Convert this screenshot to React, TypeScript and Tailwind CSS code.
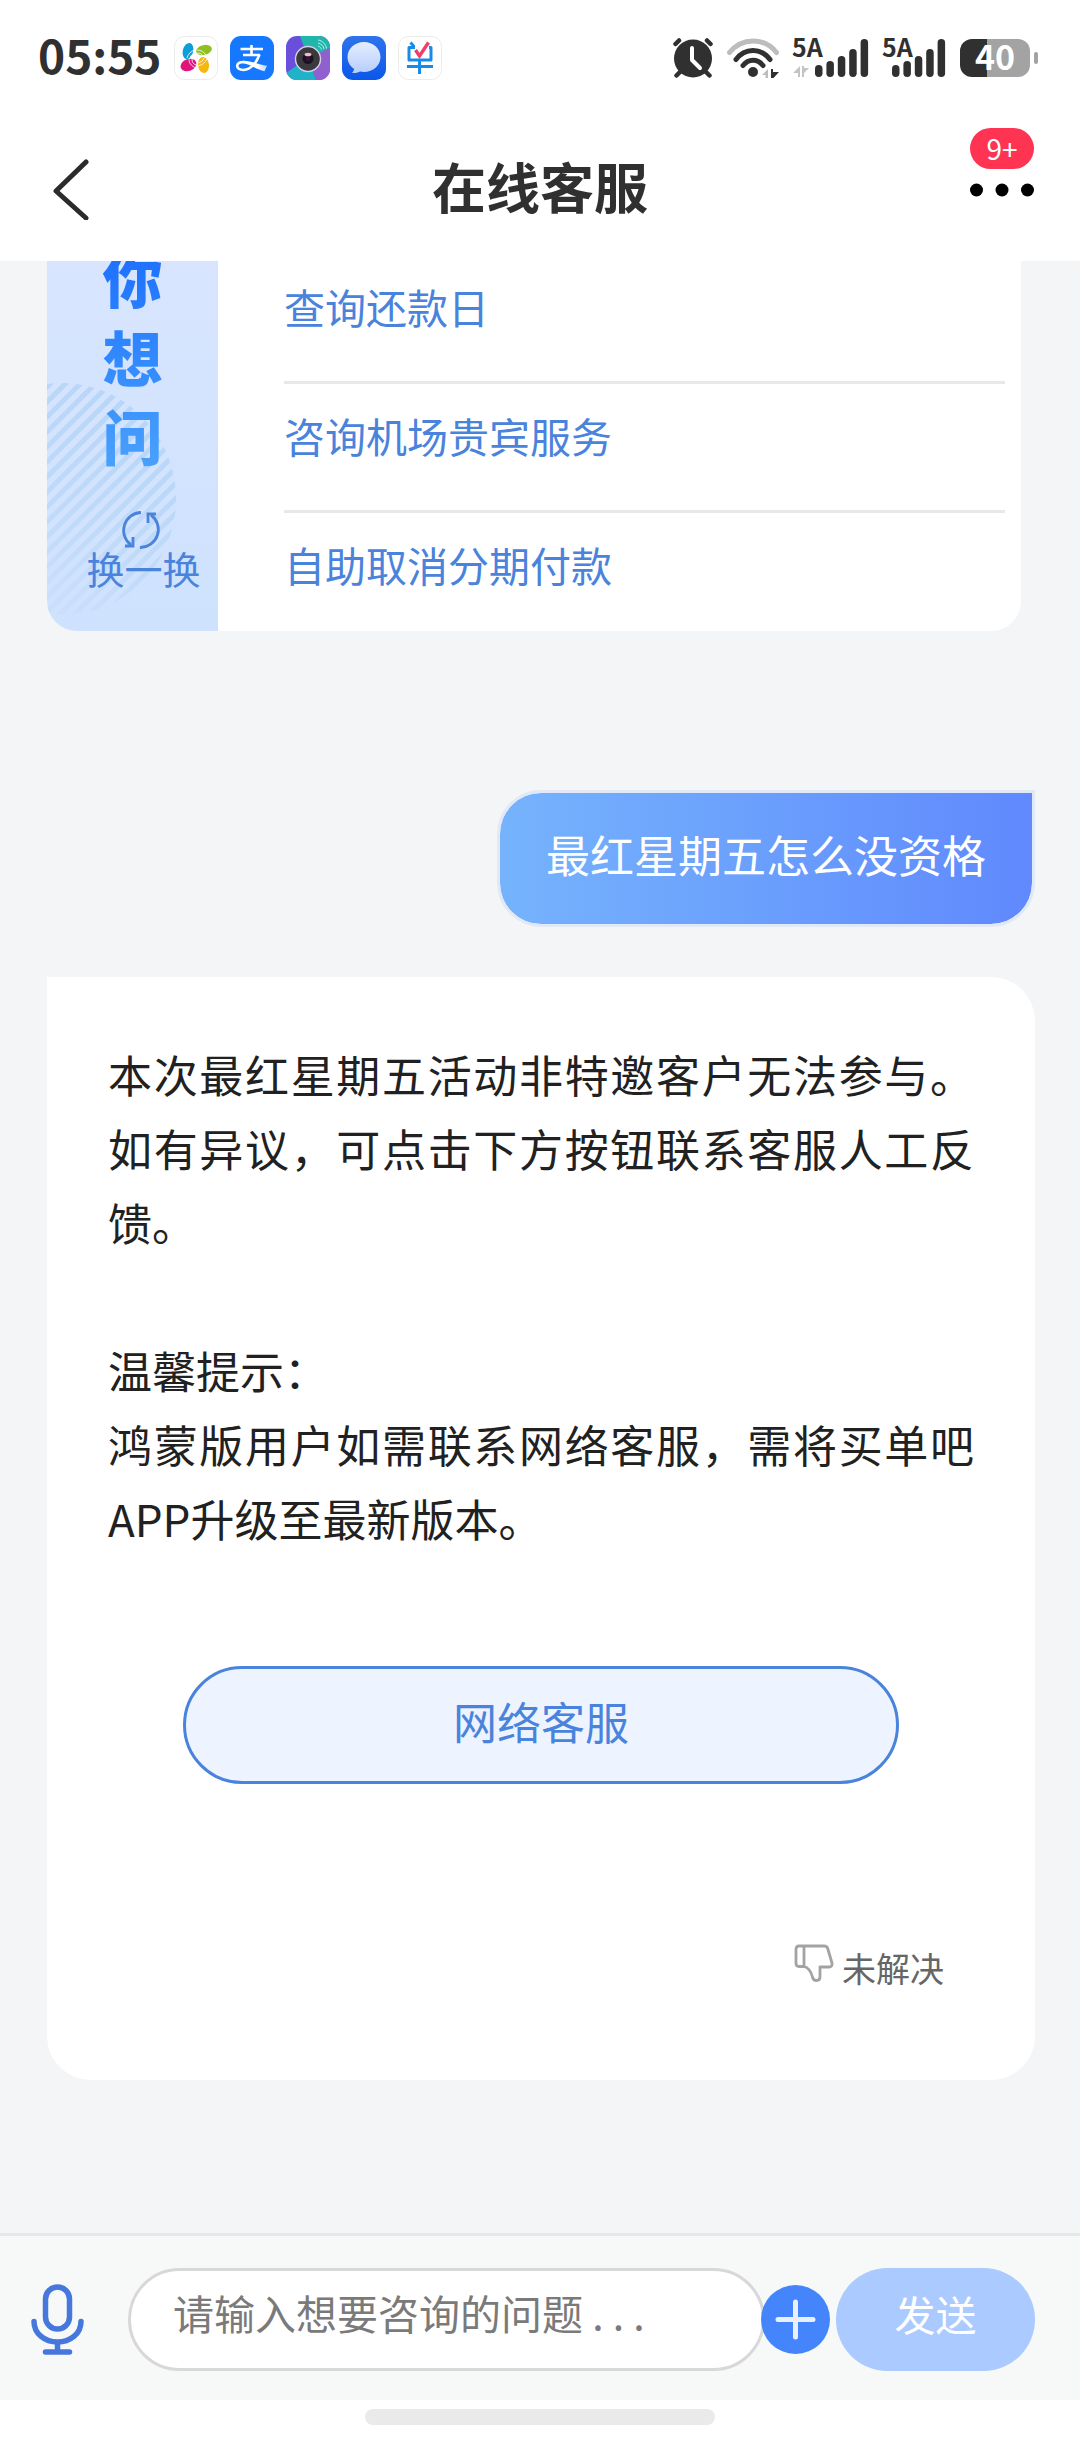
import { useState } from 'react';

const questions = ['查询还款日', '咨询机场贵宾服务', '自助取消分期付款'];

const stripes = Array.from({ length: 30 }, (_, i) => i * 15 - 180);

function PetalsIcon() {
  return (
    <svg className="size-11" viewBox="0 0 44 44">
      <rect x="0.5" y="0.5" width="43" height="43" rx="10" fill="#fff" stroke="#ececec" />
      <ellipse cx="14" cy="15" rx="5.2" ry="8.2" fill="#0d9fdb" transform="rotate(14 14 15)" />
      <ellipse cx="30" cy="14" rx="8" ry="5" fill="#8fbf21" transform="rotate(-14 30 14)" />
      <ellipse cx="14.5" cy="29" rx="8.2" ry="6" fill="#e2147c" transform="rotate(-22 14.5 29)" />
      <ellipse cx="29.5" cy="29" rx="5.5" ry="8" fill="#f6b70f" transform="rotate(-8 29.5 29)" />
      <g fill="none" stroke="#fff" strokeWidth="0.8">
        <path d="M13 22c1-4 4-7 8-8M16 23c0-3 2-5 5-6" />
        <path d="M23 14c4 0 7 2 9 5M23 17c3 0 5 1 6 3" />
        <path d="M15 23c0 4 2 7 7 9M18 23c0 3 1 5 4 6" />
        <path d="M24 30c4-1 7-3 9-7M24 27c3-1 5-2 6-5" />
      </g>
    </svg>
  );
}

function PayIcon() {
  return (
    <svg className="size-11" viewBox="0 0 44 44">
      <defs>
        <linearGradient id="pay-tail" x1="0" x2="1">
          <stop offset="0.6" stopColor="#fff" />
          <stop offset="1" stopColor="#fff" stopOpacity="0.7" />
        </linearGradient>
      </defs>
      <rect width="44" height="44" rx="11" fill="#1677ff" />
      <g fill="none" stroke="#fff" strokeWidth="2.6">
        <path d="M10.5 13H33M21.5 9v10M13 19h17" />
        <path d="M29.5 18.5C27 26 21 33.5 13.5 34C5 34 5 26 14 26" />
      </g>
      <path d="M13 24.7c7-.4 16 4.3 24 5l-2.5 5.5C27 34 20 28 13 27.3z" fill="url(#pay-tail)" />
    </svg>
  );
}

function CameraIcon() {
  return (
    <svg className="size-11" viewBox="0 0 44 44">
      <defs>
        <clipPath id="camera-clip">
          <rect width="44" height="44" rx="11" />
        </clipPath>
      </defs>
      <g clipPath="url(#camera-clip)">
        <rect width="44" height="44" fill="#6a4fdc" />
        <path d="M14 0H44V14L22 22z" fill="#22b5ac" />
        <path d="M44 12V44H30L22 22z" fill="#9160cf" />
        <path d="M0 37L22 22L30 44H0z" fill="#1fb2c9" />
      </g>
      <g fill="none" stroke="#b8f0e6" strokeWidth="1">
        <path d="M32 10c2 .5 3 2 3.5 3.5M32 7c3 .5 5.5 3 6 6M32 4c4 .5 8 4 8.5 8.5" />
      </g>
      <circle cx="22" cy="23" r="12.5" fill="#3a3a3e" stroke="#d8cfe8" strokeWidth="1.4" />
      <circle cx="22" cy="22.5" r="5.5" fill="#1a1420" />
      <ellipse cx="22" cy="18.5" rx="3.5" ry="1.8" fill="#f2b9cf" />
      <circle cx="22" cy="23" r="2.2" fill="#3a1240" />
    </svg>
  );
}

function MessageIcon() {
  return (
    <svg className="size-11" viewBox="0 0 44 44">
      <defs>
        <linearGradient id="msg-bg" x1="0" y1="0" x2="0" y2="1">
          <stop offset="0" stopColor="#2f73ec" />
          <stop offset="1" stopColor="#0b57ea" />
        </linearGradient>
        <linearGradient id="msg-fg" x1="0" y1="1" x2="0" y2="0">
          <stop offset="0" stopColor="#b7cdfb" />
          <stop offset="1" stopColor="#e4eeff" />
        </linearGradient>
      </defs>
      <rect width="44" height="44" rx="11" fill="url(#msg-bg)" />
      <path d="M22 6C13 6 5.5 12.5 5.5 21c0 5 2.5 9 6.5 11.700c0 1.800-.7 3-2 4.300c3 .2 5.500-.3 8-1.500c1.300.3 2.700.5 4 .5c9 0 16.500-6.500 16.500-15S31 6 22 6z" fill="url(#msg-fg)" />
    </svg>
  );
}

function BillIcon() {
  return (
    <svg className="size-11" viewBox="0 0 44 44">
      <rect x="0.5" y="0.5" width="43" height="43" rx="10" fill="#fff" stroke="#ececec" />
      <g fill="none" stroke="#168be8" strokeWidth="3" strokeLinejoin="round">
        <path d="M12.5 6.5l3.5 4M17 11.5H11V24H33V11.5H31M9 30.5H35M21.5 24V38" />
      </g>
      <path d="M17.5 14l4 6l9-13.5" fill="none" stroke="#f03e6b" strokeWidth="3.4" />
    </svg>
  );
}

function AlarmIcon() {
  return (
    <svg className="h-10 w-10" viewBox="0 0 40 40">
      <g stroke="#303030" strokeWidth="4.5" strokeLinecap="round">
        <path d="M2.5 6L6 2.5M37.5 6L34 2.5M7 34l-3.5 3.5M33 34l3.5 3.5" />
      </g>
      <circle cx="20" cy="20.5" r="19" fill="#303030" />
      <path d="M19 10v12l8 8" fill="none" stroke="#fff" strokeWidth="4" strokeLinecap="round" strokeLinejoin="round" />
    </svg>
  );
}

function WifiIcon() {
  return (
    <svg className="h-10 w-[52px]" viewBox="0 0 52 40">
      <g fill="none" stroke="#303030" strokeWidth="5" strokeLinecap="round">
        <path d="M2.5 14.5C15-1 37-1 49.5 14.5" stroke="#bdbdbd" />
        <path d="M9 21.5C18 9.5 34 9.5 43 21.5" />
        <path d="M16 27.5C21.5 20.5 30.5 20.5 36 27.5" />
      </g>
      <circle cx="26" cy="34" r="5" fill="#303030" />
      <path d="M41 31v9h-2.5v-3H35z" fill="#bdbdbd" />
      <path d="M44 31h2v3h6l-5.5 6H44z" fill="#303030" />
    </svg>
  );
}

function SignalIcon({ arrows = false }: { arrows?: boolean }) {
  const start = arrows ? 22 : 9;
  return (
    <svg
      className={arrows ? 'h-10 w-[76px] overflow-visible' : 'h-10 w-[63px] overflow-visible'}
      viewBox={arrows ? '0 0 76 40' : '0 0 63 40'}
      fill="#303030"
    >
      <text x="-1" y="19" className="text-[25px] font-bold">5A</text>
      {[27, 23, 18, 11, 1].map((y, i) => (
        <rect key={y} x={start + i * 11.4} y={y} width="7.5" height={39 - y} rx="3.7" />
      ))}
      {arrows && <path d="M7 28v11H5v-4H0zM9 28v11h2v-4l5-5h-5v-2z" fill="#c4c4c4" />}
    </svg>
  );
}

function StatusBar() {
  return (
    <div className="flex h-[115px] items-center justify-between pr-[42px] pl-[38px] text-[#303030]">
      <div className="flex items-center gap-3">
        <span className="pb-2 text-[46px] leading-none font-bold">05:55</span>
        <PetalsIcon />
        <PayIcon />
        <CameraIcon />
        <MessageIcon />
        <BillIcon />
      </div>
      <div className="flex items-center gap-[14px]">
        <AlarmIcon />
        <WifiIcon />
        <SignalIcon arrows />
        <SignalIcon />
        <div className="flex items-center gap-1">
          <div className="flex h-[38px] w-[70px] items-center justify-center rounded-xl bg-linear-to-r from-[#303030] from-38% to-[#a3a3a3] to-38% pb-1 text-[34px] leading-none font-bold text-white">
            40
          </div>
          <div className="h-3 w-1 rounded-full bg-[#a3a3a3]" />
        </div>
      </div>
    </div>
  );
}

function TitleBar() {
  return (
    <div className="grid h-[146px] grid-cols-3 items-center px-[46px]">
      <button type="button" aria-label="返回" className="justify-self-start pl-1.5">
        <svg className="h-16 w-10" viewBox="0 0 40 64" fill="none" stroke="#2b2b2b" strokeWidth="5" strokeLinecap="round" strokeLinejoin="round">
          <path d="M34 6L4 35L34 62" />
        </svg>
      </button>
      <h1 className="pb-1 text-center text-[54px] leading-none font-bold text-[#303030]">在线客服</h1>
      <button type="button" aria-label="更多" className="relative justify-self-end">
        <svg className="h-5 w-16" viewBox="0 0 64 20">
          <circle cx="6.5" cy="12" r="6.5" />
          <circle cx="32" cy="12" r="6.5" />
          <circle cx="57.5" cy="12" r="6.5" />
        </svg>
        <span className="absolute -top-[50px] left-0 flex h-[41px] w-16 items-center justify-center rounded-full bg-[#ff3352] pb-0.5 text-[28px] leading-none text-white">
          9+
        </span>
      </button>
    </div>
  );
}

function StripedBackdrop() {
  return (
    <svg className="absolute inset-0 h-full w-full" viewBox="0 0 171 394" preserveAspectRatio="none">
      <defs>
        <clipPath id="stripe-clip">
          <ellipse cx="15" cy="262" rx="114" ry="116" />
        </clipPath>
        <linearGradient id="stripe-fade" gradientUnits="userSpaceOnUse" x1="130" y1="200" x2="20" y2="380">
          <stop offset="0" stopColor="#b8d6f7" />
          <stop offset="0.6" stopColor="#c0daf9" />
          <stop offset="1" stopColor="#cbdffc" />
        </linearGradient>
      </defs>
      <g clipPath="url(#stripe-clip)" stroke="url(#stripe-fade)" strokeWidth="5">
        {stripes.map((s) => (
          <path key={s} d={`M-20 ${s + 200}L180 ${s}`} />
        ))}
      </g>
    </svg>
  );
}

function SuggestionCard() {
  return (
    <section className="mr-[14px] flex overflow-hidden rounded-b-[30px] bg-white text-[#4a83dc]">
      <div className="relative w-[171px] shrink-0 bg-linear-to-b from-[#d9e5fe] to-[#cee2fe]">
        <StripedBackdrop />
        <div className="relative flex flex-col">
          <h2 className="flex flex-col items-center bg-linear-to-b from-[#1a6cff] to-[#4ba2fb] bg-clip-text text-[60px] leading-[79px] font-black text-transparent">
            <span>你</span>
            <span>想</span>
            <span>问</span>
          </h2>
          <button type="button" className="mt-9 flex flex-col items-center pl-[22px]">
            <svg className="mr-1.5 size-10" viewBox="0 0 40 40" fill="none" stroke="currentColor" strokeWidth="2.8">
              <path d="M20 2.5A18 18 0 0 0 10 35" />
              <path d="M4 36h8v-9" />
              <path d="M19 37.5A18 18 0 0 0 30 5" />
              <path d="M35 4h-8v9" />
            </svg>
            <span className="text-[38px] leading-9">换一换</span>
          </button>
        </div>
      </div>
      <ul className="flex-1 pt-4 pr-4 pl-[66px]">
        {questions.map((q) => (
          <li key={q} className="border-b-[3px] border-[#e8e8e8] pt-5 pb-11 first:pt-[22px] last:border-0 last:pb-9">
            <button type="button" className="block text-[41px] leading-[62px]">{q}</button>
          </li>
        ))}
      </ul>
    </section>
  );
}

function AnswerCard() {
  return (
    <article className="mt-[50px] rounded-[44px] rounded-tl-none bg-white px-[61px] pt-[60px] pb-[88px]">
      <div className="text-justify text-[44px] leading-[74px] text-[#212121]">
        <p>本次最红星期五活动非特邀客户无法参与。如有异议，可点击下方按钮联系客服人工反馈。</p>
        <br />
        <p>温馨提示：</p>
        <p>鸿蒙版用户如需联系网络客服，需将买单吧APP升级至最新版本。</p>
      </div>
      <div className="mt-[111px] px-[75px]">
        <button type="button" className="h-[118px] w-full rounded-full border-[3px] border-[#4a83dc] bg-[#edf4ff] pb-2 text-[44px] text-[#4a83dc]">
          网络客服
        </button>
      </div>
      <button type="button" className="mt-40 mr-[30px] ml-auto flex items-start gap-2 text-[34px] leading-[48px] text-[#666]">
        <svg className="size-10" viewBox="0 0 40 40" fill="none" stroke="#a3a3a3" strokeWidth="2.8" strokeLinejoin="round">
          <path d="M5 2H30q3 0 3.7 2.5L38 19q.6 4-3 4H26V33q0 3.5-3.5 3.5T18.5 33Q16 24 10 22.5H5q-3 0-3-3V5q0-3 3-3zM10 2V22.5" />
        </svg>
        未解决
      </button>
    </article>
  );
}

function InputBar() {
  const [message, setMessage] = useState('');

  return (
    <form
      className="flex items-center border-t-[3px] border-[#e6e8e8] bg-[#f7f8f8] pt-8 pr-[45px] pb-[29px] pl-[31px]"
      onSubmit={(e) => e.preventDefault()}
    >
      <button type="button" aria-label="语音输入" className="mr-11 shrink-0">
        <svg className="h-[72px] w-[53px]" viewBox="0 0 53 72" fill="none" stroke="#4577dd" strokeWidth="5.5" strokeLinecap="round">
          <rect x="14.5" y="3" width="24" height="42" rx="12" />
          <path d="M3 37.5C3 50 14 58 26.5 58S50 50 50 37.5M26.5 58v10M14.5 68h24" />
        </svg>
      </button>
      <input
        type="text"
        aria-label="请输入想要咨询的问题"
        placeholder="请输入想要咨询的问题 . . ."
        value={message}
        onChange={(e) => setMessage(e.target.value)}
        className="h-[103px] min-w-0 flex-1 rounded-full border-[3px] border-[#d8d8d8] bg-white pr-8 pb-4 pl-[42px] text-[41px] text-[#333] outline-none placeholder:text-[#7a7a7a]"
      />
      <button type="button" aria-label="添加" className="z-10 -ml-1 shrink-0">
        <svg className="size-[69px]" viewBox="0 0 69 69">
          <circle cx="34.5" cy="34.5" r="34.5" fill="#4585fb" />
          <path d="M34.5 17v35M17 34.5h35" stroke="#e8f0ff" strokeWidth="5" strokeLinecap="round" />
        </svg>
      </button>
      <button type="submit" className="ml-1.5 h-[103px] w-[199px] shrink-0 rounded-full bg-[#abcaff] pb-3 text-[41px] text-white">
        发送
      </button>
    </form>
  );
}

export default function App() {
  return (
    <div className="flex min-h-screen flex-col bg-[#f3f5f7] font-['Noto_Sans_CJK_SC',sans-serif]" lang="zh-CN">
      <header className="bg-white">
        <StatusBar />
        <TitleBar />
      </header>

      <main className="flex-1 overflow-hidden">
        {/* the log is scrolled a little, so the first card is cut by the header */}
        <div className="-mt-6 flex flex-col pr-[45px] pb-[152px] pl-[47px]">
          <SuggestionCard />
          <div className="mt-[159px] self-end rounded-[44px] rounded-tr-none border-[3px] border-[#e2e9f6] bg-linear-to-r from-[#76b3fc] to-[#6089fd] bg-clip-padding px-[46px] pt-[29px] pb-[38px] text-[44px] leading-[64px] text-white">
            最红星期五怎么没资格
          </div>
          <AnswerCard />
        </div>
      </main>

      <footer className="bg-white">
        <InputBar />
        <div className="flex justify-center pt-[9px] pb-[19px]">
          <div className="h-4 w-[350px] rounded-full bg-[#eaeaea]" />
        </div>
      </footer>
    </div>
  );
}
